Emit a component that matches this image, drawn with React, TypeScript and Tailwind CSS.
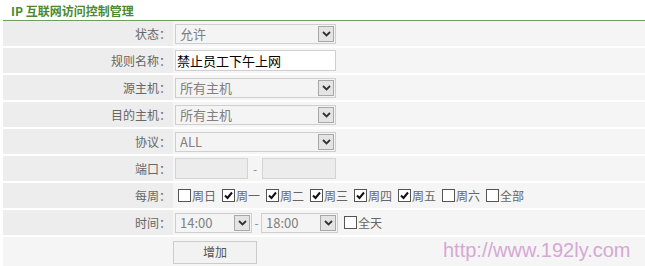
import { ReactNode } from 'react';

const font = { fontFamily: '"Noto Sans CJK SC", "Liberation Sans", sans-serif' };

const Chevron = () => (
  <svg width="9" height="6" viewBox="0 0 9 6">
    <path d="M1 1 L4.5 4.5 L8 1" fill="none" stroke="#333" strokeWidth="1.8" />
  </svg>
);

const Select = ({ value, width }: { value: string; width: string }) => (
  <div className={`flex h-[20px] items-center justify-between border border-[#cfcfcf] bg-[#f4f4f4] pl-[4px] pr-[1px] ${width}`}>
    <span className="text-[13px] leading-none text-[#808080]">{value}</span>
    <span className="flex h-[16px] w-[16px] items-center justify-center border border-[#a8a8a8] bg-[#e4e4e4]">
      <Chevron />
    </span>
  </div>
);

const Check = ({ checked, label }: { checked?: boolean; label: string }) => (
  <label className="mr-[6px] flex items-center">
    <span className="flex h-[13px] w-[13px] items-center justify-center border border-[#555] bg-white">
      {checked && (
        <svg width="9" height="9" viewBox="0 0 9 9">
          <path d="M1 4.5 L3.5 7 L8 1.5" fill="none" stroke="#111" strokeWidth="2" />
        </svg>
      )}
    </span>
    <span className="ml-[1px] text-[12px] text-[#666]">{label}</span>
  </label>
);

const Row = ({ label, children }: { label: string; children: ReactNode }) => (
  <div className="flex h-[27px] border-b-2 border-white">
    <div className="flex w-[170px] items-center justify-end bg-[#ededed] pr-[2px] text-[12px] text-[#666]">
      {label}：
    </div>
    <div className="flex flex-1 items-center bg-[#f5f5f5] pl-[2px]">{children}</div>
  </div>
);

const days = [
  { label: '周日', checked: false },
  { label: '周一', checked: true },
  { label: '周二', checked: true },
  { label: '周三', checked: true },
  { label: '周四', checked: true },
  { label: '周五', checked: true },
  { label: '周六', checked: false },
  { label: '全部', checked: false },
];

export default function App() {
  return (
    <div className="relative h-[266px] w-[645px] overflow-hidden bg-white" style={font}>
      <div className="px-[11px] pt-[2px] text-[12px] font-bold leading-[18px] text-[#4b8a2c]">IP 互联网访问控制管理</div>
      <div className="ml-[3px] border-t-[1.5px] border-[#6f9f58]">
        <Row label="状态">
          <Select value="允许" width="w-[161px]" />
        </Row>
        <Row label="规则名称">
          <div className="flex h-[21px] w-[161px] items-center border border-[#cfcfcf] bg-white pl-[1px] text-[13px] text-black">
            禁止员工下午上网
          </div>
        </Row>
        <Row label="源主机">
          <Select value="所有主机" width="w-[161px]" />
        </Row>
        <Row label="目的主机">
          <Select value="所有主机" width="w-[161px]" />
        </Row>
        <Row label="协议">
          <Select value="ALL" width="w-[161px]" />
        </Row>
        <Row label="端口">
          <div className="h-[21px] w-[73px] border border-[#d4d4d4] bg-[#ececec]" />
          <span className="w-[14px] text-center text-[12px] text-[#888]">-</span>
          <div className="h-[21px] w-[74px] border border-[#d4d4d4] bg-[#ececec]" />
        </Row>
        <Row label="每周">
          <div className="flex items-center pl-[3px]">
            {days.map((d) => (
              <Check key={d.label} label={d.label} checked={d.checked} />
            ))}
          </div>
        </Row>
        <Row label="时间">
          <Select value="14:00" width="w-[77px]" />
          <span className="w-[9px] text-center text-[12px] text-[#888]">-</span>
          <Select value="18:00" width="w-[77px]" />
          <div className="ml-[6px]">
            <Check label="全天" />
          </div>
        </Row>
        <div className="flex h-[30px] items-center bg-[#f5f5f5] pl-[170px]">
          <button className="h-[23px] w-[84px] border border-[#cccccc] bg-[#f2f2f2] text-[12px] text-[#555]">增加</button>
        </div>
      </div>
      <div
        className="absolute left-[443px] top-[237px] text-[20px] leading-[26px] text-[#d6a8d4]"
        style={{ fontFamily: '"Liberation Sans", Arial, sans-serif' }}
      >
        http://www.192ly.com
      </div>
    </div>
  );
}
